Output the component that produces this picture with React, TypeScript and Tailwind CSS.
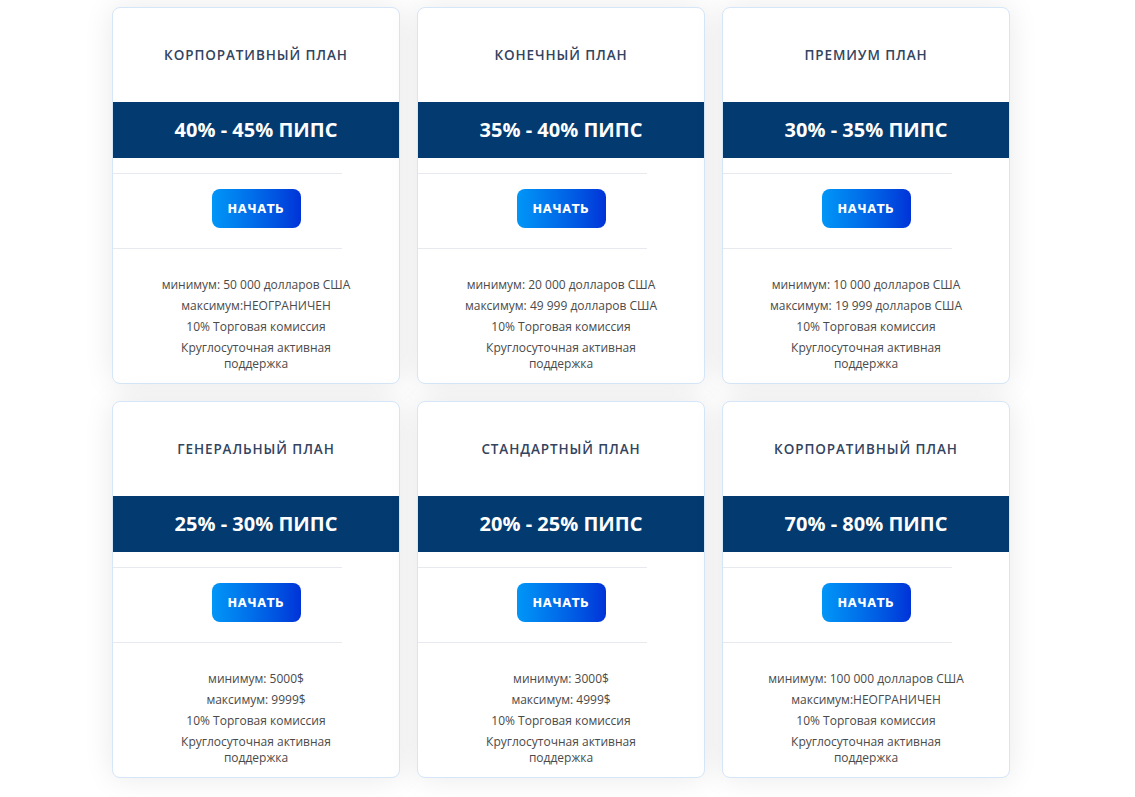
import React from 'react';

type Plan = {
  title: string;
  range: string;
  features: string[];
};

const plans: Plan[] = [
  {
    title: 'КОРПОРАТИВНЫЙ ПЛАН',
    range: '40% - 45% ПИПС',
    features: ['минимум: 50 000 долларов США', 'максимум:НЕОГРАНИЧЕН', '10% Торговая комиссия', 'Круглосуточная активная поддержка'],
  },
  {
    title: 'КОНЕЧНЫЙ ПЛАН',
    range: '35% - 40% ПИПС',
    features: ['минимум: 20 000 долларов США', 'максимум: 49 999 долларов США', '10% Торговая комиссия', 'Круглосуточная активная поддержка'],
  },
  {
    title: 'ПРЕМИУМ ПЛАН',
    range: '30% - 35% ПИПС',
    features: ['минимум: 10 000 долларов США', 'максимум: 19 999 долларов США', '10% Торговая комиссия', 'Круглосуточная активная поддержка'],
  },
  {
    title: 'ГЕНЕРАЛЬНЫЙ ПЛАН',
    range: '25% - 30% ПИПС',
    features: ['минимум: 5000$', 'максимум: 9999$', '10% Торговая комиссия', 'Круглосуточная активная поддержка'],
  },
  {
    title: 'СТАНДАРТНЫЙ ПЛАН',
    range: '20% - 25% ПИПС',
    features: ['минимум: 3000$', 'максимум: 4999$', '10% Торговая комиссия', 'Круглосуточная активная поддержка'],
  },
  {
    title: 'КОРПОРАТИВНЫЙ ПЛАН',
    range: '70% - 80% ПИПС',
    features: ['минимум: 100 000 долларов США', 'максимум:НЕОГРАНИЧЕН', '10% Торговая комиссия', 'Круглосуточная активная поддержка'],
  },
];

function PlanCard({ plan }: { plan: Plan }) {
  return (
    <div className="bg-white rounded-lg border border-[#d5e6f8] shadow-[0_0_30px_rgba(0,0,0,0.09)] overflow-hidden flex flex-col h-[377px]">
      {/* Title */}
      <div className="h-[94px] flex items-center justify-center">
        <h3 className="text-[13.5px] font-semibold tracking-[0.9px] text-[#33445f] [font-family:'Open_Sans',sans-serif]">
          {plan.title}
        </h3>
      </div>

      {/* Pips band */}
      <div className="h-[56px] bg-[#033a70] flex items-center justify-center">
        <span className="text-white text-[20px] font-bold [font-family:'Open_Sans',sans-serif]">
          {plan.range}
        </span>
      </div>

      <div className="w-[80%] h-px bg-[#e6e9ee] mt-[15px]" />
      <div className="flex justify-center pt-[15px] pb-[20px]">
        <button className="w-[89px] h-[39px] pt-[2px] rounded-lg bg-gradient-to-r from-[#0096f7] to-[#0032d8] text-white text-[11.5px] font-black tracking-[0.6px] [font-family:'DejaVu_Sans',sans-serif]">
          НАЧАТЬ
        </button>
      </div>
      <div className="w-[80%] h-px bg-[#e6e9ee]" />

      {/* Features */}
      <ul className="mx-auto w-[205px] pt-[28px] flex flex-col gap-[5px] text-center text-[12px] leading-[16px] text-[#4a4a4a] [font-family:'Open_Sans',sans-serif]">
        {plan.features.map((f, i) => (
          <li key={i}>{f}</li>
        ))}
      </ul>
    </div>
  );
}

export default function App() {
  return (
    <div className="min-h-screen bg-white pt-[7px] pl-[112px]">
      <div className="w-[898px] grid grid-cols-3 gap-x-[17px] gap-y-[17px]">
        {plans.map((p, i) => (
          <PlanCard key={i} plan={p} />
        ))}
      </div>
    </div>
  );
}
